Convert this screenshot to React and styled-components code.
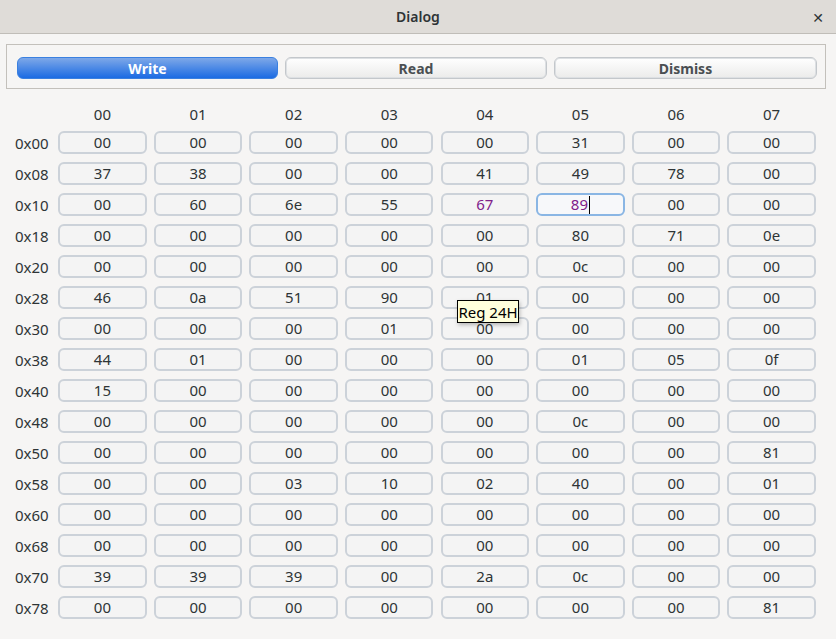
import React from 'react';
import styled, { createGlobalStyle } from 'styled-components';

const GlobalStyle = createGlobalStyle`
  html, body {
    margin: 0;
    padding: 0;
    background: #f6f5f4;
  }
  body {
    font-family: 'Noto Sans', 'DejaVu Sans', sans-serif;
    color: #2e3436;
  }
`;

const Window = styled.div`
  position: relative;
  width: 836px;
  height: 639px;
  background: #f6f5f4;
  overflow: hidden;
`;

const TitleBar = styled.div`
  height: 33px;
  border-bottom: 1px solid #c0bdb8;
  background: #dfdcd8;
  display: flex;
  align-items: center;
  justify-content: center;
  position: relative;
  font-size: 14px;
  font-weight: 600;
  color: #2e3436;
`;

const CloseButton = styled.span`
  position: absolute;
  right: 12px;
  top: 8px;
  font-size: 14px;
  font-weight: 900;
  color: #2e3436;
`;

const Frame = styled.div`
  margin: 10px 10px 0 6px;
  border: 1px solid #c3c0bb;
  padding: 12px 8px 9px 10px;
  display: grid;
  grid-template-columns: 261px 262px 263px;
  column-gap: 7px;
`;

const ActionButton = styled.button`
  height: 22px;
  border-radius: 6px;
  font-family: 'Noto Sans', sans-serif;
  font-size: 14px;
  font-weight: 700;
  padding: 0;
  border: ${(p) => (p.primary ? '1px solid #3a80e0' : '1px solid #c3c7cb')};
  color: ${(p) => (p.primary ? '#ffffff' : '#4a4f52')};
  background: ${(p) =>
    p.primary
      ? 'linear-gradient(to bottom, #7ea8e8, #1b6be3)'
      : 'linear-gradient(to bottom, #ffffff, #ebebea)'};
  box-shadow: ${(p) => (p.primary ? 'none' : 'inset 0 0 0 1px #dde0e3')};
`;

const Grid = styled.div`
  margin: 8px 0 0 15px;
  display: grid;
  grid-template-columns: 36px repeat(8, 88.3px);
  grid-template-rows: 26px repeat(16, 23px);
  column-gap: 7.3px;
  row-gap: 8px;
  font-size: 15px;
`;

const ColHeader = styled.div`
  box-sizing: border-box;
  padding-top: 8px;
  display: flex;
  align-items: center;
  justify-content: center;
  color: #2e3436;
`;

const RowLabel = styled.div`
  display: flex;
  align-items: center;
  color: #2e3436;
`;

const Cell = styled.div`
  box-sizing: border-box;
  border-radius: 6px;
  border: 2px solid ${(p) => (p.focused ? '#8ab6e4' : '#ccd2d9')};
  background: ${(p) => (p.focused ? '#f7f8fa' : '#f4f4f4')};
  color: ${(p) => (p.changed ? '#80208a' : '#2e3436')};
  display: flex;
  align-items: center;
  justify-content: center;
  line-height: 1;
`;

const Caret = styled.span`
  display: inline-block;
  width: 1px;
  height: 18px;
  margin-left: 1px;
  background: #000;
`;

const Tooltip = styled.div`
  position: absolute;
  left: 457px;
  top: 300px;
  box-sizing: border-box;
  width: 62px;
  height: 23px;
  border: 1px solid #000;
  background: #ffffdc;
  color: #000;
  font-size: 15px;
  display: flex;
  align-items: center;
  justify-content: center;
  box-shadow: 1px 2px 4px rgba(0, 0, 0, 0.25);
`;

const registers = [
  ['00', '00', '00', '00', '00', '31', '00', '00'],
  ['37', '38', '00', '00', '41', '49', '78', '00'],
  ['00', '60', '6e', '55', '67', '89', '00', '00'],
  ['00', '00', '00', '00', '00', '80', '71', '0e'],
  ['00', '00', '00', '00', '00', '0c', '00', '00'],
  ['46', '0a', '51', '90', '01', '00', '00', '00'],
  ['00', '00', '00', '01', '00', '00', '00', '00'],
  ['44', '01', '00', '00', '00', '01', '05', '0f'],
  ['15', '00', '00', '00', '00', '00', '00', '00'],
  ['00', '00', '00', '00', '00', '0c', '00', '00'],
  ['00', '00', '00', '00', '00', '00', '00', '81'],
  ['00', '00', '03', '10', '02', '40', '00', '01'],
  ['00', '00', '00', '00', '00', '00', '00', '00'],
  ['00', '00', '00', '00', '00', '00', '00', '00'],
  ['39', '39', '39', '00', '2a', '0c', '00', '00'],
  ['00', '00', '00', '00', '00', '00', '00', '81'],
];

const hex2 = (n) => n.toString(16).padStart(2, '0');

export default function App() {
  return (
    <Window>
      <GlobalStyle />
      <TitleBar>
        Dialog
        <CloseButton>✕</CloseButton>
      </TitleBar>
      <Frame>
        <ActionButton primary>Write</ActionButton>
        <ActionButton>Read</ActionButton>
        <ActionButton>Dismiss</ActionButton>
      </Frame>
      <Grid>
        <div />
        {Array.from({ length: 8 }, (_, i) => (
          <ColHeader key={'h' + i}>{hex2(i)}</ColHeader>
        ))}
        {registers.map((row, r) => (
          <React.Fragment key={r}>
            <RowLabel>0x{hex2(r * 8).toUpperCase()}</RowLabel>
            {row.map((v, c) => {
              const focused = r === 2 && c === 5;
              const changed = r === 2 && (c === 4 || c === 5);
              return (
                <Cell key={c} focused={focused} changed={changed}>
                  {v}
                  {focused && <Caret />}
                </Cell>
              );
            })}
          </React.Fragment>
        ))}
      </Grid>
      <Tooltip>Reg 24H</Tooltip>
    </Window>
  );
}
